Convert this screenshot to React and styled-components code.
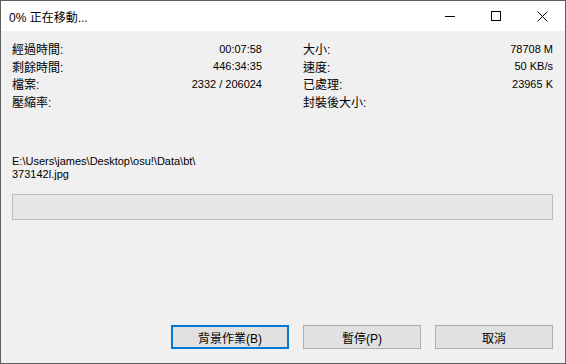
import styled, { createGlobalStyle } from 'styled-components';

const GlobalStyle = createGlobalStyle`
  html, body {
    margin: 0;
    padding: 0;
    background: #f0f0f0;
  }
  * { box-sizing: border-box; }
`;

const FONT = `"Liberation Sans", "Noto Sans CJK TC", sans-serif`;

const stats = [
  [{ label: '經過時間:', value: '00:07:58' }, { label: '大小:', value: '78708 M' }],
  [{ label: '剩餘時間:', value: '446:34:35' }, { label: '速度:', value: '50 KB/s' }],
  [{ label: '檔案:', value: '2332 / 206024' }, { label: '已處理:', value: '23965 K' }],
  [{ label: '壓縮率:', value: '' }, { label: '封裝後大小:', value: '' }],
];

export default function App() {
  return (
    <>
      <GlobalStyle />
      <Window>
        <TitleBar>
          <Title>0% 正在移動...</Title>
          <Controls>
            <CtrlButton>
              <svg width="10" height="10" viewBox="0 0 10 10">
                <path d="M0 5.5h10" stroke="#000" strokeWidth="1" />
              </svg>
            </CtrlButton>
            <CtrlButton>
              <svg width="10" height="10" viewBox="0 0 10 10">
                <rect x="0.5" y="0.5" width="9" height="9" fill="none" stroke="#000" strokeWidth="1" />
              </svg>
            </CtrlButton>
            <CtrlButton>
              <svg width="11" height="11" viewBox="0 0 11 11">
                <path d="M0.5 0.5l10 10M10.5 0.5l-10 10" stroke="#000" strokeWidth="1" />
              </svg>
            </CtrlButton>
          </Controls>
        </TitleBar>
        <Body>
          <StatsGrid>
            {stats.map((row) =>
              row.map(({ label, value }) => (
                <StatRow key={label}>
                  <Label>{label}</Label>
                  <Value>{value}</Value>
                </StatRow>
              ))
            )}
          </StatsGrid>
          <PathText>
            E:\Users\james\Desktop\osu!\Data\bt\
            <br />
            373142l.jpg
          </PathText>
          <Progress />
          <ButtonRow>
            <DlgButton $default>背景作業(B)</DlgButton>
            <DlgButton>暫停(P)</DlgButton>
            <DlgButton>取消</DlgButton>
          </ButtonRow>
        </Body>
      </Window>
    </>
  );
}

const Window = styled.div`
  width: 566px;
  height: 364px;
  border: 1px solid #5f5f5f;
  display: flex;
  flex-direction: column;
  background: #f0f0f0;
  font-family: ${FONT};
  color: #000;
  overflow: hidden;
`;

const TitleBar = styled.div`
  height: 30px;
  background: #fff;
  display: flex;
  align-items: center;
  padding-left: 8px;
`;

const Title = styled.div`
  flex: 1;
  font-size: 12px;
  padding-top: 1px;
`;

const Controls = styled.div`
  display: flex;
  height: 100%;
`;

const CtrlButton = styled.div`
  width: 46px;
  height: 100%;
  display: flex;
  align-items: center;
  justify-content: center;
  svg { display: block; }
`;

const Body = styled.div`
  flex: 1;
  display: flex;
  flex-direction: column;
  padding: 9px 11px 14px 11px;
`;

const StatsGrid = styled.div`
  display: grid;
  grid-template-columns: 250px 250px;
  column-gap: 41px;
`;

const StatRow = styled.div`
  display: flex;
  justify-content: space-between;
  align-items: center;
  height: 17.5px;
`;

const Label = styled.span`
  font-size: 12px;
`;

const Value = styled.span`
  font-size: 11px;
`;

const PathText = styled.div`
  margin-top: 45px;
  font-size: 11px;
  line-height: 13px;
`;

const Progress = styled.div`
  margin-top: 13px;
  height: 26px;
  width: 541px;
  background: #e6e6e6;
  border: 1px solid #bcbcbc;
`;

const ButtonRow = styled.div`
  margin-top: auto;
  display: flex;
  justify-content: flex-end;
  gap: 14px;
  padding-right: 1px;
`;

const DlgButton = styled.div`
  width: 118px;
  height: 24px;
  display: flex;
  align-items: center;
  justify-content: center;
  font-size: 12px;
  background: #e1e1e1;
  border: ${(p) => (p.$default ? '2px solid #0078d7' : '1px solid #adadad')};
`;
